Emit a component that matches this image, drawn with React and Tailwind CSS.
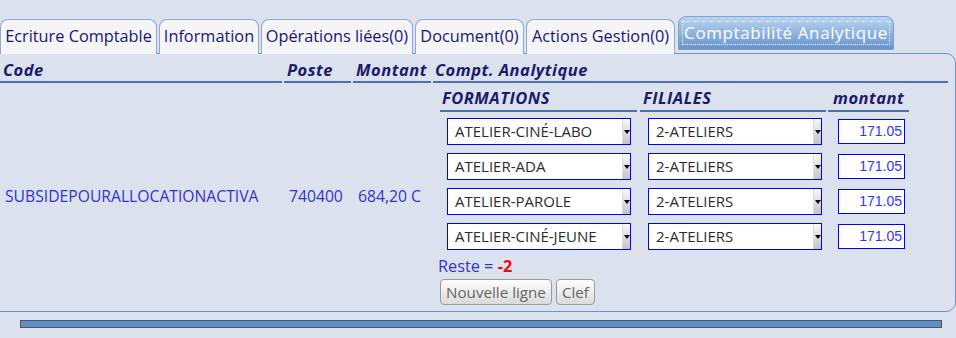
import React from "react";

const tabs = [
  ["Ecriture Comptable", 157],
  ["Information", 100],
  ["Opérations liées(0)", 152],
  ["Document(0)", 109],
  ["Actions Gestion(0)", 149],
];

const rows = ["ATELIER-CINÉ-LABO", "ATELIER-ADA", "ATELIER-PAROLE", "ATELIER-CINÉ-JEUNE"];

function Arrow() {
  return (
    <div className="w-[8px] flex items-center justify-center bg-linear-to-b from-[#fafafa] to-[#c4c4c4] border-l border-[#dcdcdc]">
      <div className="w-0 h-0 border-l-[3px] border-r-[3px] border-t-[4px] border-l-transparent border-r-transparent border-t-black" />
    </div>
  );
}

function Select({ value, width }) {
  return (
    <div className={`${width} h-[27px] border border-[#0000ff] bg-white flex items-stretch`}>
      <div className="flex-1 pl-[7px] flex items-center text-[15px] text-[#2b2b2b] leading-none">{value}</div>
      <Arrow />
    </div>
  );
}

export default function App() {
  return (
    <div className="w-[956px] h-[338px] overflow-hidden bg-[#dce1ee] font-['Open_Sans',sans-serif]">
      <div className="flex items-end gap-[2px] pt-[17px] h-[54px] relative z-10">
        {tabs.map(([t, w]) => (
          <div
            key={t}
            style={{ width: w }}
            className="h-[35px] border border-b-0 border-[#8ea8d8] rounded-t-[8px] bg-[#f5f5f5] flex items-center justify-center pb-[1px] text-[16.3px] text-[#16167a] whitespace-nowrap"
          >
            {t}
          </div>
        ))}
        <div className="ml-[1px] w-[216px] h-[34px] mb-[4px] border border-[#7c9fd4] rounded-t-[8px] bg-linear-to-b from-[#b9d3ef] to-[#6894cb] flex items-center justify-center">
          <span className="outline-1 outline-dotted outline-white px-[1px] text-[17px] tracking-[0.6px] leading-[22px] text-white whitespace-nowrap">
            Comptabilité Analytique
          </span>
        </div>
      </div>

      <div className="-mt-[1px] ml-[-10px] w-[966px] h-[259px] border border-[#6b93cf] rounded-[10px] pl-[9px] flex flex-col">
        <div className="flex gap-[2px] text-[16.5px] tracking-[0.5px] font-bold italic text-[#1b1b6a] whitespace-nowrap">
          <div className="w-[282px] h-[29px] pt-[5px] pl-[3px] leading-[21px] border-b-2 border-[#4b70ad]">Code</div>
          <div className="w-[67px] h-[29px] pt-[5px] pl-[3px] leading-[21px] border-b-2 border-[#4b70ad]">Poste</div>
          <div className="w-[78px] h-[29px] pt-[5px] pl-[3px] leading-[21px] border-b-2 border-[#4b70ad]">Montant</div>
          <div className="w-[515px] h-[29px] pt-[5px] pl-[2px] leading-[21px] border-b-2 border-[#4b70ad]">Compt. Analytique</div>
        </div>

        <div className="flex gap-[2px] flex-1">
          <div className="w-[282px] flex items-center pl-[5px] text-[15.7px] text-[#3333cc]">SUBSIDEPOURALLOCATIONACTIVA</div>
          <div className="w-[67px] flex items-center pl-[5px] text-[15.7px] text-[#3333cc]">740400</div>
          <div className="w-[78px] flex items-center pl-[5px] text-[15.7px] text-[#3333cc] whitespace-nowrap">684,20 C</div>
          <div className="w-[515px] pl-[7px] pt-[2px] flex flex-col">
            <div className="flex text-[16.5px] tracking-[0.5px] font-bold italic text-[#1b1b6a] whitespace-nowrap">
              <div className="w-[197px] h-[27px] pt-[2px] pl-[2px] leading-[21px] border-b-2 border-[#4b70ad]">FORMATIONS</div>
              <div className="ml-[3px] w-[186px] h-[27px] pt-[2px] pl-[3px] leading-[21px] border-b-2 border-[#4b70ad]">FILIALES</div>
              <div className="ml-[2px] w-[81px] h-[27px] pt-[2px] pl-[5px] leading-[21px] border-b-2 border-[#4b70ad]">montant</div>
            </div>
            <div className="mt-[2px] flex flex-col">
              {rows.map((r) => (
                <div key={r} className="flex items-center h-[35px]">
                  <div className="w-[197px] pl-[7px]">
                    <Select value={r} width="w-[184px]" />
                  </div>
                  <div className="ml-[3px] w-[186px] pl-[8px]">
                    <Select value="2-ATELIERS" width="w-[174px]" />
                  </div>
                  <div className="ml-[2px] w-[81px] pl-[10px]">
                    <div className="w-[67px] h-[25px] border border-[#0000ff] bg-white flex items-center justify-end pr-[2px] font-['Liberation_Sans',sans-serif] text-[14px] text-[#3333ff]">
                      171.05
                    </div>
                  </div>
                </div>
              ))}
            </div>
            <div className="mt-[2px] -ml-[2px] h-[20px] leading-[20px] text-[16.3px] text-[#3333cc]">
              Reste = <span className="text-[#ff0000] font-bold">-2</span>
            </div>
            <div className="mt-[3px] flex gap-[4px]">
              <div className="h-[26px] px-[5px] border border-[#9a9a9a] rounded-[4px] bg-linear-to-b from-white to-[#dadada] flex items-center text-[15.2px] text-[#666666] whitespace-nowrap">
                Nouvelle ligne
              </div>
              <div className="h-[26px] px-[5px] border border-[#9a9a9a] rounded-[4px] bg-linear-to-b from-white to-[#dadada] flex items-center text-[15.2px] text-[#666666]">
                Clef
              </div>
            </div>
          </div>
        </div>
      </div>

      <div className="mt-[8px] ml-[20px] w-[922px] h-[8px] border border-[#555555] bg-[#5b8fcf]" />
    </div>
  );
}
